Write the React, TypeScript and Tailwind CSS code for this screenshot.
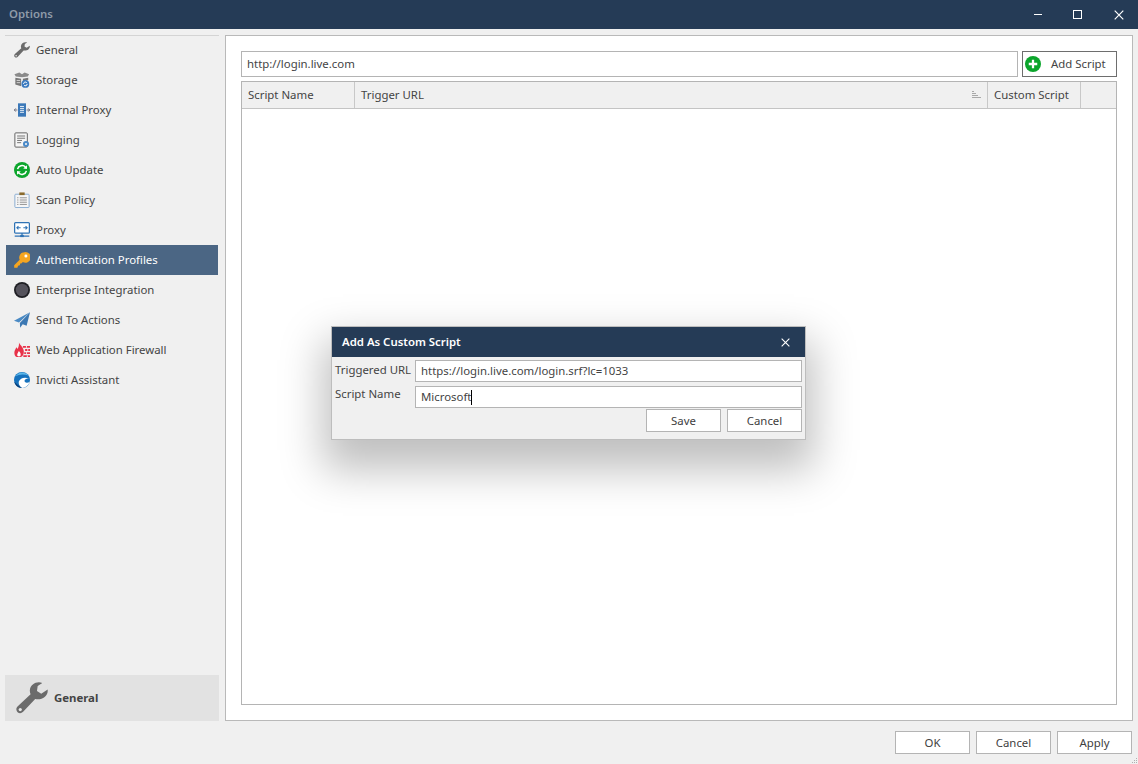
import React from "react";

const I = ({ children }: { children: React.ReactNode }) => (
  <svg width="16" height="16" viewBox="0 0 18 18">{children}</svg>
);

const WrenchPath = () => (
  <>
    <path d="M17.8 4.2 L14.2 6.6 L11.8 5 L12.2 2.2 L14.8 .5 C11.4 -.6 8.2 1.4 7.8 4.5 C7.7 5.4 7.9 6.2 8.2 6.9 L1 13.6 C-.2 14.8 .1 16.2 .9 17 C1.8 17.8 3 17.8 4 16.8 L10.8 9.5 C14.2 10.4 18.3 8.2 17.8 4.2 Z" fill="#6b6b6b" />
    <circle cx="2.4" cy="15.5" r=".9" fill="#e8e8e8" />
  </>
);
const Wrench = () => <I><WrenchPath /></I>;
const Storage = () => (
  <I>
    <path d="M0.5 2.5 L6 .5 L9 2.5 L12 .5 L17 2.5 L15.5 5 L9 6 L2 5 Z" fill="#8b8b8b" />
    <path d="M1.5 6.5 L8 7.5 L8 16 L1.5 14 Z M10 7.5 L16 6.5 L16 9 L10 11 Z" fill="#777" />
    <path d="M3 9.5 H7 M3 12 H7" stroke="#ddd" strokeWidth="1" />
    <circle cx="12.8" cy="13.4" r="4.4" fill="#3a7ac0" />
    <path d="M10.8 13.4 a2 2 0 0 1 3.6 -1.3 M14.8 13.4 a2 2 0 0 1 -3.6 1.3" stroke="#fff" strokeWidth="1.1" fill="none" />
  </I>
);
const InternalProxy = () => (
  <I>
    <rect x="4.5" y="1.5" width="9" height="15" fill="#3b78b8" />
    <path d="M6.8 5 H11.2 M6.8 7.2 H11.2 M6.8 9.4 H11.2 M6.8 11.6 H11.2" stroke="#fff" strokeWidth="1" />
    <path d="M0.3 9 H3.8 M2 7.2 L0.3 9 L2 10.8 M14.2 9 H17.7 M16 7.2 L17.7 9 L16 10.8" stroke="#667" strokeWidth="1" fill="none" />
  </I>
);
const Logging = () => (
  <I>
    <rect x="1" y="1" width="14" height="16" rx="1" fill="#f6f6f6" stroke="#555" />
    <path d="M3.5 4.5 H12.5 M3.5 7 H12.5 M3.5 9.5 H9 M3.5 12 H8" stroke="#666" strokeWidth="1" />
    <circle cx="13.5" cy="13.5" r="3.4" fill="#4a8ac8" />
    <circle cx="13.5" cy="13.5" r="1.2" fill="#f0f0f0" />
  </I>
);
const AutoUpdate = () => (
  <I>
    <circle cx="9" cy="9" r="9" fill="#0ca52c" />
    <path d="M4 8 A5.2 5 0 0 1 13 5.8 M14 10 A5.2 5 0 0 1 5 12.2" stroke="#fff" strokeWidth="1.7" fill="none" />
    <path d="M14.6 3.6 L14.6 8 L10.4 7.4 Z M3.4 14.4 L3.4 10 L7.6 10.6 Z" fill="#fff" />
  </I>
);
const ScanPolicy = () => (
  <I>
    <rect x="1" y="2.5" width="16" height="15" rx="1" fill="#f6f6f6" stroke="#7fa6cf" />
    <rect x="6" y="0.5" width="6" height="3" fill="#8a6a2c" />
    <path d="M6.5 6.5 H14.5 M6.5 9 H14.5 M6.5 11.5 H14.5 M6.5 14 H14.5 M3.5 6.5 H5 M3.5 9 H5 M3.5 11.5 H5 M3.5 14 H5" stroke="#888" strokeWidth="1" />
  </I>
);
const Proxy = () => (
  <I>
    <rect x=".7" y=".7" width="16.6" height="11.8" rx="1" fill="#fff" stroke="#2f73b5" strokeWidth="1.4" />
    <path d="M3.2 6.5 H7.5 M5 4.7 L3.2 6.5 L5 8.3 M10.5 6.5 H14.8 M13 4.7 L14.8 6.5 L13 8.3" stroke="#2f73b5" strokeWidth="1.2" fill="none" />
    <path d="M9 12.5 V15.5 M.8 16 H17.2" stroke="#2f73b5" strokeWidth="1.4" />
    <rect x="7" y="14.5" width="4" height="2.5" fill="#2f73b5" />
  </I>
);
const Key = () => (
  <I>
    <path d="M11.8 .2 A6 6 0 0 0 6.4 8.7 L.2 14.8 L.2 17.8 L3.8 17.8 L4.6 15.4 L6.6 15 L7 13 L8.8 12.6 L9.8 11.2 A6 6 0 1 0 11.8 .2 Z" fill="#f6a51f" />
    <circle cx="13.4" cy="4.6" r="1.7" fill="#fff" />
  </I>
);
const Enterprise = () => (
  <I>
    <circle cx="9" cy="9" r="9" fill="#1f1f24" />
    <circle cx="9" cy="9" r="7" fill="#55535c" />
  </I>
);
const SendTo = () => (
  <I>
    <path d="M18 .4 L0 9.8 L5.6 11.8 Z" fill="#4a8ac4" />
    <path d="M18 .4 L6.6 12.4 L6.9 17.8 L9.8 13.8 L14.2 15.6 Z" fill="#3c78b3" />
  </I>
);
const Firewall = () => (
  <I>
    <path d="M5.5 .5 C6.5 3.2 9.8 5 10.8 9 C11.5 12.5 10.6 15.6 7.8 17 L3 17 C.6 15.6 -.3 12.6 1 9.4 C1.6 8 2.2 7.2 2.6 5.8 C3.4 6.4 3.8 7.2 4 8 C5.2 6 5.9 3.2 5.5 .5 Z" fill="#e8334a" />
    <path d="M5.5 10 C6.8 11.6 8 13 7.4 15.2 C7 16.4 4.8 16.6 3.8 15.4 C3 14 4.4 12 5.5 10 Z" fill="#fff" />
    <path d="M10 4.5 H18 V6.5 H10 Z M12.5 8 H18 V10 H12.5 Z M11.5 11.5 H18 V13.5 H11.5 Z M10.5 15 H18 V17 H10.5 Z" fill="#e8334a" />
    <path d="M14 4.5 V6.5 M15.5 8 V10 M14 11.5 V13.5 M15 15 V17" stroke="#fff" strokeWidth="1" />
  </I>
);
const Invicti = () => (
  <I>
    <circle cx="9" cy="9" r="9" fill="#1672bd" />
    <path d="M1.6 5 A9 9 0 0 1 16.4 4 C11 1.8 5 2.6 1.6 5 Z" fill="#5bb7e8" />
    <path d="M5.5 10.5 C7 6.8 11.5 5.2 17 7.2 C13 7 11.2 9 12.2 11 C13.2 12.6 15.6 12.6 17.8 11 C16.2 15.4 12.6 18 9 18 C6 16 4.6 13 5.5 10.5 Z" fill="#fff" />
    <path d="M.4 11 C3 13 4.6 15.6 9 18 C4.6 18 1.2 14.8 .4 11 Z" fill="#0c3f78" />
  </I>
);

const items: [string, React.ReactNode][] = [
  ["General", <Wrench />],
  ["Storage", <Storage />],
  ["Internal Proxy", <InternalProxy />],
  ["Logging", <Logging />],
  ["Auto Update", <AutoUpdate />],
  ["Scan Policy", <ScanPolicy />],
  ["Proxy", <Proxy />],
  ["Authentication Profiles", <Key />],
  ["Enterprise Integration", <Enterprise />],
  ["Send To Actions", <SendTo />],
  ["Web Application Firewall", <Firewall />],
  ["Invicti Assistant", <Invicti />],
];

const Btn = ({ children }: { children: React.ReactNode }) => (
  <button className="w-[75px] h-[23px] bg-white border border-[#b4b4b4] flex items-center justify-center text-[#404040]">
    {children}
  </button>
);

const CloseX = ({ s = 10 }: { s?: number }) => (
  <svg width={s} height={s} viewBox="0 0 10 10">
    <path d="M.7 .7 L9.3 9.3 M9.3 .7 L.7 9.3" stroke="#fff" strokeWidth="1.2" />
  </svg>
);

export default function App() {
  return (
    <div className="relative w-[1138px] h-[764px] overflow-hidden bg-[#f0f0f0] text-[11.4px] text-[#444] flex flex-col font-['Noto_Sans','Open_Sans',sans-serif]">
      <div className="h-[29px] bg-[#253b56] flex items-center justify-between shrink-0">
        <span className="ml-[9px] mb-[2px] text-[#8e9aa8] font-semibold">Options</span>
        <div className="flex items-center">
          <span className="w-[8px] h-px bg-white mr-[31px]" />
          <span className="w-[9px] h-[9px] border border-white mr-[32px]" />
          <span className="mr-[14px] flex"><CloseX /></span>
        </div>
      </div>

      <div className="flex h-[692px] pt-[6px] pl-[5px] shrink-0">
        <div className="w-[214px] flex flex-col justify-between">
          <div className="border-t border-[#d4d4d4]">
            <div className="-mt-px">
              {items.map(([label, icon]) => {
                const active = label === "Authentication Profiles";
                return (
                  <div
                    key={label}
                    className={`h-[30px] flex items-center pl-[8px] ml-px mr-px ${active ? "bg-[#4b6684] text-white" : "text-[#444]"}`}
                  >
                    <span className="w-[22px] flex shrink-0">{icon}</span>
                    <span>{label}</span>
                  </div>
                );
              })}
            </div>
          </div>
          <div className="h-[46px] bg-[#e2e2e2] flex items-center pl-[11px] gap-[6px] font-bold text-[#444]">
            <svg width="32" height="32" viewBox="0 0 18 18"><WrenchPath /></svg>
            <span>General</span>
          </div>
        </div>

        <div className="ml-[6px] w-[908px] bg-white border border-[#b9b9b9] p-[15px] flex flex-col">
          <div className="flex h-[26px] gap-[4px]">
            <div className="w-[777px] border border-[#b4b4b4] flex items-center pl-[5px]">http://login.live.com</div>
            <div className="w-[95px] border border-[#6e6e6e] flex items-center pl-[2px]">
              <svg width="16" height="16" viewBox="0 0 17 17">
                <circle cx="8.5" cy="8.5" r="8.5" fill="#0ca52c" />
                <path d="M8.5 4 V13 M4 8.5 H13" stroke="#fff" strokeWidth="2.4" />
              </svg>
              <span className="ml-[10px]">Add Script</span>
            </div>
          </div>
          <div className="mt-[4px] flex-1 border border-[#b4b4b4] flex flex-col">
            <div className="h-[27px] bg-[#f0f0f0] border-b border-[#c4c4c4] flex items-center shrink-0">
              <div className="w-[113px] h-full border-r border-[#c8c8c8] flex items-center pl-[6px]">Script Name</div>
              <div className="w-[633px] h-full border-r border-[#c8c8c8] flex items-center justify-between pl-[6px] pr-[6px]">
                <span>Trigger URL</span>
                <svg width="9" height="8" viewBox="0 0 9 8">
                  <path d="M0 .5 H2 M0 2.5 H4 M0 4.5 H6 M0 6.5 H9" stroke="#a8a8a8" strokeWidth="1" />
                </svg>
              </div>
              <div className="w-[93px] h-full border-r border-[#c8c8c8] flex items-center pl-[6px]">Custom Script</div>
            </div>
            <div className="flex-1 bg-white" />
          </div>
        </div>
      </div>

      <div className="flex justify-end gap-[6px] pr-[6px] pt-[10px]">
        <Btn>OK</Btn>
        <Btn>Cancel</Btn>
        <Btn>Apply</Btn>
      </div>

      <svg className="absolute right-0 bottom-0" width="6" height="6" viewBox="0 0 6 6">
        <path d="M4 0h1v1H4z M2 2h1v1H2z M4 2h1v1H4z M0 4h1v1H0z M2 4h1v1H2z M4 4h1v1H4z" fill="#b0b0b0" />
      </svg>

      <div className="absolute left-[331px] top-[326px] w-[475px] h-[114px] bg-[#f0f0f0] border border-[#bdbdbd] shadow-[0_22px_40px_8px_rgba(0,0,0,0.25)] flex flex-col">
        <div className="h-[30px] bg-[#253b56] flex items-center justify-between pl-[10px] pr-[15px] text-white font-semibold shrink-0">
          <span>Add As Custom Script</span>
          <CloseX s={9} />
        </div>
        <div className="pl-[3px] pr-[3px] pt-[3px] flex flex-col">
          <div className="flex h-[22px]">
            <span className="w-[80px] leading-[19px] whitespace-nowrap">Triggered URL</span>
            <div className="flex-1 bg-white border border-[#b4b4b4] flex items-center pl-[5px]">https://login.live.com/login.srf?lc=1033</div>
          </div>
          <div className="flex h-[22px] mt-[4px]">
            <span className="w-[80px] leading-[16px] whitespace-nowrap">Script Name</span>
            <div className="flex-1 bg-white border border-[#b4b4b4] flex items-center pl-[5px]">
              Microsoft<span className="w-px h-[15px] bg-black" />
            </div>
          </div>
          <div className="flex justify-end gap-[6px] mt-[1px]">
            <Btn>Save</Btn>
            <Btn>Cancel</Btn>
          </div>
        </div>
      </div>
    </div>
  );
}
